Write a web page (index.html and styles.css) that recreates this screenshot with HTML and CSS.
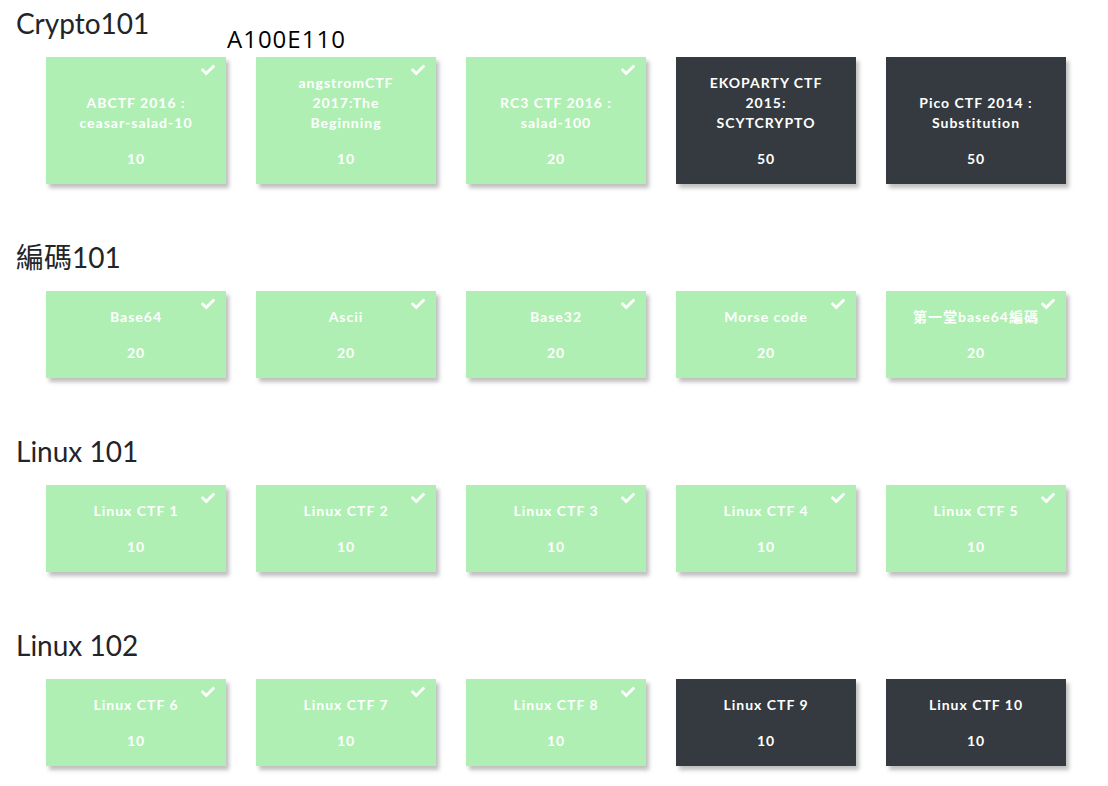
FILE: index.html
```html
<!DOCTYPE html>
<html>
<head>
<meta charset="utf-8">
<link rel="stylesheet" href="styles.css">
</head>
<body>
<div class="page">
  <div class="stray">A100E110</div>

  <section class="category">
    <h3 class="cat-title">Crypto101</h3>
    <div class="cards">
      <div class="card solved"><svg class="check" viewBox="0 0 512 512"><path d="M173.898 439.404l-166.4-166.4c-9.997-9.997-9.997-26.206 0-36.204l36.203-36.204c9.997-9.998 26.207-9.998 36.204 0L192 312.69 432.095 72.596c9.997-9.997 26.207-9.997 36.204 0l36.203 36.204c9.997 9.997 9.997 26.206 0 36.204l-294.4 294.401c-9.998 9.997-26.207 9.997-36.204-.001z"/></svg><div class="name">ABCTF 2016 : ceasar-salad-10</div><div class="pts">10</div></div>
      <div class="card solved"><svg class="check" viewBox="0 0 512 512"><path d="M173.898 439.404l-166.4-166.4c-9.997-9.997-9.997-26.206 0-36.204l36.203-36.204c9.997-9.998 26.207-9.998 36.204 0L192 312.69 432.095 72.596c9.997-9.997 26.207-9.997 36.204 0l36.203 36.204c9.997 9.997 9.997 26.206 0 36.204l-294.4 294.401c-9.998 9.997-26.207 9.997-36.204-.001z"/></svg><div class="name">angstromCTF 2017:The Beginning</div><div class="pts">10</div></div>
      <div class="card solved"><svg class="check" viewBox="0 0 512 512"><path d="M173.898 439.404l-166.4-166.4c-9.997-9.997-9.997-26.206 0-36.204l36.203-36.204c9.997-9.998 26.207-9.998 36.204 0L192 312.69 432.095 72.596c9.997-9.997 26.207-9.997 36.204 0l36.203 36.204c9.997 9.997 9.997 26.206 0 36.204l-294.4 294.401c-9.998 9.997-26.207 9.997-36.204-.001z"/></svg><div class="name">RC3 CTF 2016 : salad-100</div><div class="pts">20</div></div>
      <div class="card"><div class="name">EKOPARTY CTF 2015: SCYTCRYPTO</div><div class="pts">50</div></div>
      <div class="card"><div class="name">Pico CTF 2014 : Substitution</div><div class="pts">50</div></div>
    </div>
  </section>

  <section class="category">
    <h3 class="cat-title">編碼101</h3>
    <div class="cards">
      <div class="card solved"><svg class="check" viewBox="0 0 512 512"><path d="M173.898 439.404l-166.4-166.4c-9.997-9.997-9.997-26.206 0-36.204l36.203-36.204c9.997-9.998 26.207-9.998 36.204 0L192 312.69 432.095 72.596c9.997-9.997 26.207-9.997 36.204 0l36.203 36.204c9.997 9.997 9.997 26.206 0 36.204l-294.4 294.401c-9.998 9.997-26.207 9.997-36.204-.001z"/></svg><div class="name">Base64</div><div class="pts">20</div></div>
      <div class="card solved"><svg class="check" viewBox="0 0 512 512"><path d="M173.898 439.404l-166.4-166.4c-9.997-9.997-9.997-26.206 0-36.204l36.203-36.204c9.997-9.998 26.207-9.998 36.204 0L192 312.69 432.095 72.596c9.997-9.997 26.207-9.997 36.204 0l36.203 36.204c9.997 9.997 9.997 26.206 0 36.204l-294.4 294.401c-9.998 9.997-26.207 9.997-36.204-.001z"/></svg><div class="name">Ascii</div><div class="pts">20</div></div>
      <div class="card solved"><svg class="check" viewBox="0 0 512 512"><path d="M173.898 439.404l-166.4-166.4c-9.997-9.997-9.997-26.206 0-36.204l36.203-36.204c9.997-9.998 26.207-9.998 36.204 0L192 312.69 432.095 72.596c9.997-9.997 26.207-9.997 36.204 0l36.203 36.204c9.997 9.997 9.997 26.206 0 36.204l-294.4 294.401c-9.998 9.997-26.207 9.997-36.204-.001z"/></svg><div class="name">Base32</div><div class="pts">20</div></div>
      <div class="card solved"><svg class="check" viewBox="0 0 512 512"><path d="M173.898 439.404l-166.4-166.4c-9.997-9.997-9.997-26.206 0-36.204l36.203-36.204c9.997-9.998 26.207-9.998 36.204 0L192 312.69 432.095 72.596c9.997-9.997 26.207-9.997 36.204 0l36.203 36.204c9.997 9.997 9.997 26.206 0 36.204l-294.4 294.401c-9.998 9.997-26.207 9.997-36.204-.001z"/></svg><div class="name">Morse code</div><div class="pts">20</div></div>
      <div class="card solved"><svg class="check" viewBox="0 0 512 512"><path d="M173.898 439.404l-166.4-166.4c-9.997-9.997-9.997-26.206 0-36.204l36.203-36.204c9.997-9.998 26.207-9.998 36.204 0L192 312.69 432.095 72.596c9.997-9.997 26.207-9.997 36.204 0l36.203 36.204c9.997 9.997 9.997 26.206 0 36.204l-294.4 294.401c-9.998 9.997-26.207 9.997-36.204-.001z"/></svg><div class="name">第一堂base64編碼</div><div class="pts">20</div></div>
    </div>
  </section>

  <section class="category">
    <h3 class="cat-title">Linux 101</h3>
    <div class="cards">
      <div class="card solved"><svg class="check" viewBox="0 0 512 512"><path d="M173.898 439.404l-166.4-166.4c-9.997-9.997-9.997-26.206 0-36.204l36.203-36.204c9.997-9.998 26.207-9.998 36.204 0L192 312.69 432.095 72.596c9.997-9.997 26.207-9.997 36.204 0l36.203 36.204c9.997 9.997 9.997 26.206 0 36.204l-294.4 294.401c-9.998 9.997-26.207 9.997-36.204-.001z"/></svg><div class="name">Linux CTF 1</div><div class="pts">10</div></div>
      <div class="card solved"><svg class="check" viewBox="0 0 512 512"><path d="M173.898 439.404l-166.4-166.4c-9.997-9.997-9.997-26.206 0-36.204l36.203-36.204c9.997-9.998 26.207-9.998 36.204 0L192 312.69 432.095 72.596c9.997-9.997 26.207-9.997 36.204 0l36.203 36.204c9.997 9.997 9.997 26.206 0 36.204l-294.4 294.401c-9.998 9.997-26.207 9.997-36.204-.001z"/></svg><div class="name">Linux CTF 2</div><div class="pts">10</div></div>
      <div class="card solved"><svg class="check" viewBox="0 0 512 512"><path d="M173.898 439.404l-166.4-166.4c-9.997-9.997-9.997-26.206 0-36.204l36.203-36.204c9.997-9.998 26.207-9.998 36.204 0L192 312.69 432.095 72.596c9.997-9.997 26.207-9.997 36.204 0l36.203 36.204c9.997 9.997 9.997 26.206 0 36.204l-294.4 294.401c-9.998 9.997-26.207 9.997-36.204-.001z"/></svg><div class="name">Linux CTF 3</div><div class="pts">10</div></div>
      <div class="card solved"><svg class="check" viewBox="0 0 512 512"><path d="M173.898 439.404l-166.4-166.4c-9.997-9.997-9.997-26.206 0-36.204l36.203-36.204c9.997-9.998 26.207-9.998 36.204 0L192 312.69 432.095 72.596c9.997-9.997 26.207-9.997 36.204 0l36.203 36.204c9.997 9.997 9.997 26.206 0 36.204l-294.4 294.401c-9.998 9.997-26.207 9.997-36.204-.001z"/></svg><div class="name">Linux CTF 4</div><div class="pts">10</div></div>
      <div class="card solved"><svg class="check" viewBox="0 0 512 512"><path d="M173.898 439.404l-166.4-166.4c-9.997-9.997-9.997-26.206 0-36.204l36.203-36.204c9.997-9.998 26.207-9.998 36.204 0L192 312.69 432.095 72.596c9.997-9.997 26.207-9.997 36.204 0l36.203 36.204c9.997 9.997 9.997 26.206 0 36.204l-294.4 294.401c-9.998 9.997-26.207 9.997-36.204-.001z"/></svg><div class="name">Linux CTF 5</div><div class="pts">10</div></div>
    </div>
  </section>

  <section class="category">
    <h3 class="cat-title">Linux 102</h3>
    <div class="cards">
      <div class="card solved"><svg class="check" viewBox="0 0 512 512"><path d="M173.898 439.404l-166.4-166.4c-9.997-9.997-9.997-26.206 0-36.204l36.203-36.204c9.997-9.998 26.207-9.998 36.204 0L192 312.69 432.095 72.596c9.997-9.997 26.207-9.997 36.204 0l36.203 36.204c9.997 9.997 9.997 26.206 0 36.204l-294.4 294.401c-9.998 9.997-26.207 9.997-36.204-.001z"/></svg><div class="name">Linux CTF 6</div><div class="pts">10</div></div>
      <div class="card solved"><svg class="check" viewBox="0 0 512 512"><path d="M173.898 439.404l-166.4-166.4c-9.997-9.997-9.997-26.206 0-36.204l36.203-36.204c9.997-9.998 26.207-9.998 36.204 0L192 312.69 432.095 72.596c9.997-9.997 26.207-9.997 36.204 0l36.203 36.204c9.997 9.997 9.997 26.206 0 36.204l-294.4 294.401c-9.998 9.997-26.207 9.997-36.204-.001z"/></svg><div class="name">Linux CTF 7</div><div class="pts">10</div></div>
      <div class="card solved"><svg class="check" viewBox="0 0 512 512"><path d="M173.898 439.404l-166.4-166.4c-9.997-9.997-9.997-26.206 0-36.204l36.203-36.204c9.997-9.998 26.207-9.998 36.204 0L192 312.69 432.095 72.596c9.997-9.997 26.207-9.997 36.204 0l36.203 36.204c9.997 9.997 9.997 26.206 0 36.204l-294.4 294.401c-9.998 9.997-26.207 9.997-36.204-.001z"/></svg><div class="name">Linux CTF 8</div><div class="pts">10</div></div>
      <div class="card"><div class="name">Linux CTF 9</div><div class="pts">10</div></div>
      <div class="card"><div class="name">Linux CTF 10</div><div class="pts">10</div></div>
    </div>
  </section>
</div>
</body>
</html>
```

FILE: styles.css
```css
html, body {
  margin: 0;
  padding: 0;
  background: #ffffff;
}

body {
  font-family: Lato, "Noto Sans CJK TC", sans-serif;
  color: #212529;
}

.page {
  position: relative;
  padding: 6px 16px 20px 16px;
  display: flex;
  flex-direction: column;
  gap: 56px;
}

.stray {
  position: absolute;
  left: 227px;
  top: 23px;
  font-family: "Open Sans", sans-serif;
  font-size: 24px;
  line-height: 32px;
  letter-spacing: 1px;
  color: #000000;
}

.category {
  display: flex;
  flex-direction: column;
}

.cat-title {
  margin: 0 0 17px 0;
  font-family: Lato, "Noto Sans CJK TC", sans-serif;
  font-size: 28px;
  font-weight: 400;
  line-height: 34px;
  color: #212529;
}

.cards {
  display: flex;
  gap: 30px;
  padding-left: 30px;
}

.card {
  position: relative;
  width: 180px;
  box-sizing: border-box;
  padding: 16px 20px 15px 20px;
  background: #343a40;
  color: #ffffff;
  box-shadow: 3px 4px 4px rgba(0, 0, 0, 0.25);
  display: flex;
  flex-direction: column;
  justify-content: flex-end;
  align-items: center;
  text-align: center;
  font-family: Lato, "Noto Sans CJK TC", sans-serif;
  font-weight: 700;
  font-size: 14px;
  line-height: 20px;
  letter-spacing: 1px;
}

.card.solved {
  background: #b0efb3;
}

.name {
  margin-bottom: 16px;
}

.check {
  position: absolute;
  top: 6px;
  right: 11px;
  width: 14px;
  height: 14px;
  fill: #ffffff;
}
```
